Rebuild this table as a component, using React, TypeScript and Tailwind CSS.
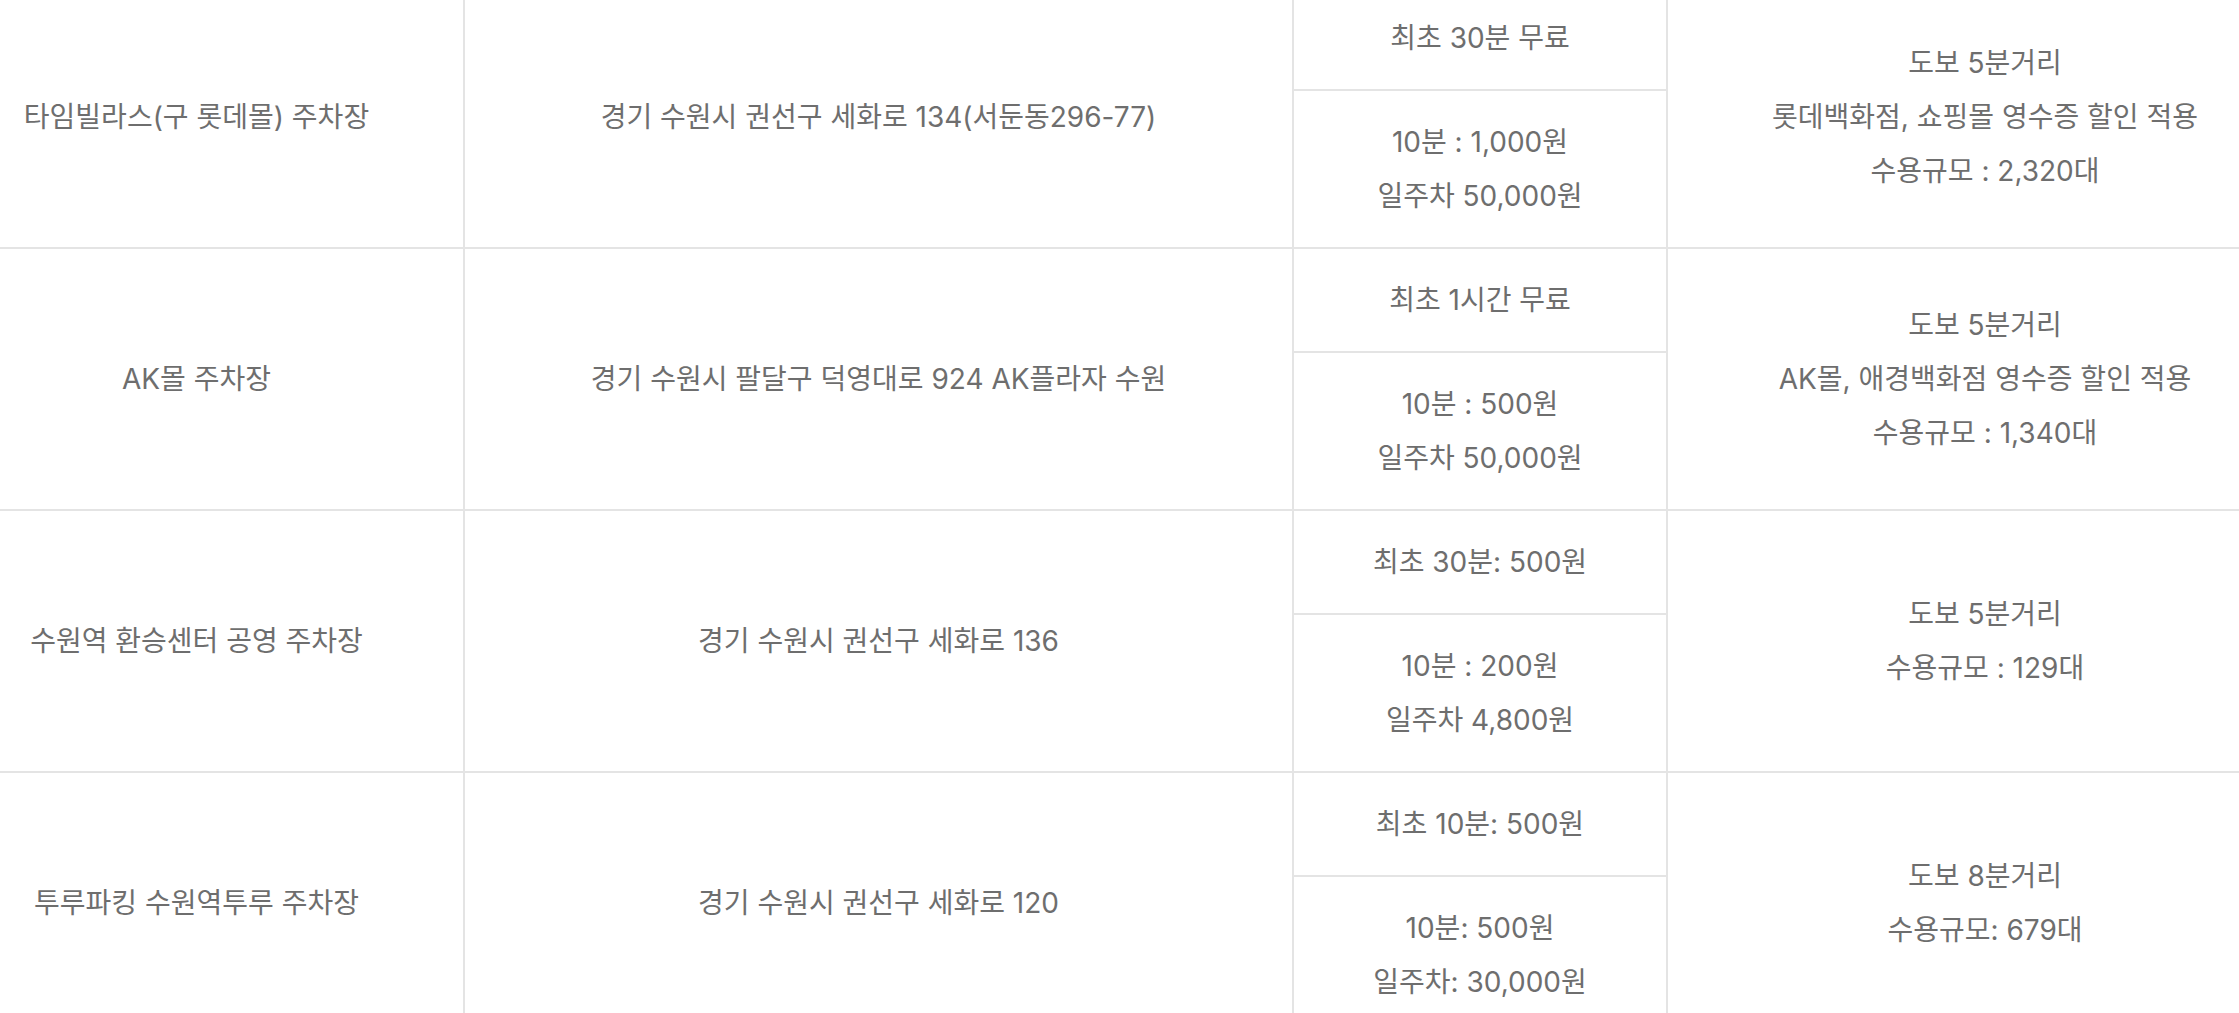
const rows = [
  {
    name: "타임빌라스(구 롯데몰) 주차장",
    addr: "경기 수원시 권선구 세화로 134(서둔동296-77)",
    first: "최초 30분 무료",
    fee: ["10분 : 1,000원", "일주차 50,000원"],
    note: ["도보 5분거리", "롯데백화점, 쇼핑몰 영수증 할인 적용", "수용규모 : 2,320대"],
  },
  {
    name: "AK몰 주차장",
    addr: "경기 수원시 팔달구 덕영대로 924 AK플라자 수원",
    first: "최초 1시간 무료",
    fee: ["10분 : 500원", "일주차 50,000원"],
    note: ["도보 5분거리", "AK몰, 애경백화점 영수증 할인 적용", "수용규모 : 1,340대"],
  },
  {
    name: "수원역 환승센터 공영 주차장",
    addr: "경기 수원시 권선구 세화로 136",
    first: "최초 30분: 500원",
    fee: ["10분 : 200원", "일주차 4,800원"],
    note: ["도보 5분거리", "수용규모 : 129대"],
  },
  {
    name: "투루파킹 수원역투루 주차장",
    addr: "경기 수원시 권선구 세화로 120",
    first: "최초 10분: 500원",
    fee: ["10분: 500원", "일주차: 30,000원"],
    note: ["도보 8분거리", "수용규모: 679대"],
  },
]

function ParkingRow({ row }: { row: (typeof rows)[number] }) {
  return (
    <div className="flex h-[262px] border-b-2 border-[#e4e4e4]">
      <div className="flex w-[465px] shrink-0 items-center justify-center border-r-2 border-[#e4e4e4] pr-[70px]">
        <p>{row.name}</p>
      </div>
      <div className="flex w-[829px] shrink-0 items-center justify-center border-r-2 border-[#e4e4e4]">
        <p>{row.addr}</p>
      </div>
      <div className="flex w-[374px] shrink-0 flex-col border-r-2 border-[#e4e4e4]">
        <div className="flex h-[104px] items-center justify-center border-b-2 border-[#e4e4e4]">
          <p>{row.first}</p>
        </div>
        <div className="flex flex-1 flex-col items-center justify-center">
          {row.fee.map((t, i) => (
            <p key={`fee-${i}`}>{t}</p>
          ))}
        </div>
      </div>
      <div className="flex w-[634px] shrink-0 flex-col items-center justify-center">
        {row.note.map((t, i) => (
          <p key={`note-${i}`}>{t}</p>
        ))}
      </div>
    </div>
  )
}

export default function App() {
  return (
    <div className="h-screen w-full overflow-hidden bg-white">
      <div className="-mt-[13px] w-[2302px] text-[28px] leading-[54px] text-[#6e6e6e] [font-family:Inter,'Noto_Sans_CJK_KR',sans-serif]">
        {rows.map((row, idx) => (
          <ParkingRow key={`row-${idx}`} row={row} />
        ))}
      </div>
    </div>
  )
}
